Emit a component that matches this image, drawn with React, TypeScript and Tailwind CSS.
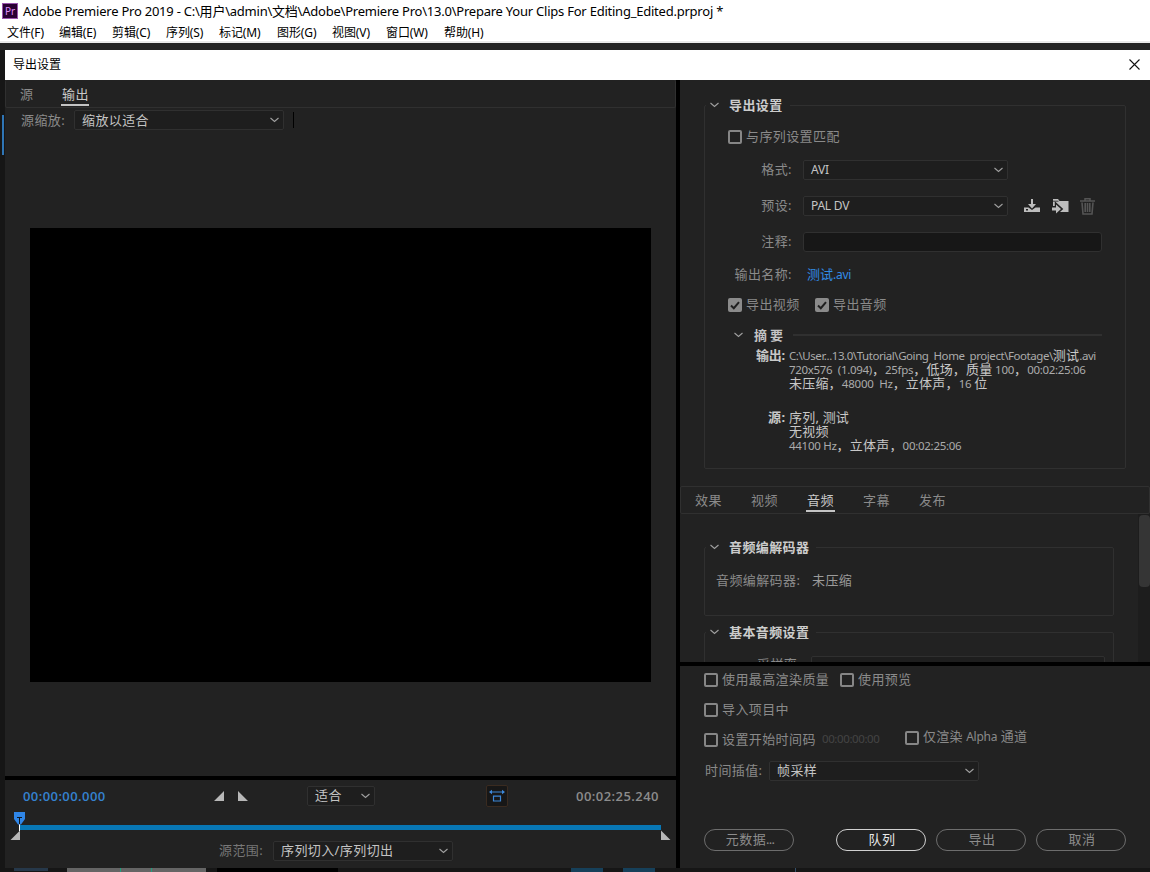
import React from "react";

function Chevron({ className = "" }: { className?: string }) {
  return (
    <svg width="9" height="6" viewBox="0 0 9 6" className={`shrink-0 ${className}`} fill="none" stroke="#a0a0a0" strokeWidth="1.1">
      <path d="M0.5 1 L4.5 4.5 L8.5 1" />
    </svg>
  );
}

function Select({ className = "", lift = "-mt-0.5", children }: { className?: string; lift?: string; children: React.ReactNode }) {
  return (
    <div className={`flex h-5 shrink-0 items-center justify-between rounded-[2px] border border-[#303030] bg-[#1e1e1e] pl-[7px] pr-1 text-[#c4c4c4] ${className}`}>
      <span className={lift}>{children}</span>
      <Chevron />
    </div>
  );
}

function Box({ checked = false }: { checked?: boolean }) {
  return checked ? (
    <span className="flex size-[14px] shrink-0 items-center justify-center rounded-[2px] bg-[#8b8b8b]">
      <svg width="10" height="9" viewBox="0 0 10 9" fill="none" stroke="#202020" strokeWidth="2">
        <path d="M1 4.5 L3.8 7.2 L9 1.2" />
      </svg>
    </span>
  ) : (
    <span className="size-[14px] shrink-0 rounded-[2px] border-2 border-[#868686]" />
  );
}

function Check({ label, checked, className = "" }: { label: React.ReactNode; checked?: boolean; className?: string }) {
  return (
    <label className={`flex h-5 shrink-0 items-center gap-1 ${className}`}>
      <Box checked={checked} />
      <span className="-mt-[3px]">{label}</span>
    </label>
  );
}

function Legend({ children }: { children: React.ReactNode }) {
  return (
    <div className="-mt-[9px] flex">
      <div className="ml-px flex h-[18px] items-center bg-[#222222] pb-0.5 pl-1 pr-[7px] text-[#cccccc]">
        <Chevron className="mr-[10px]" />
        <span className="-mt-px font-bold">{children}</span>
      </div>
    </div>
  );
}

function Pill({ children, className = "border-[#6d6d6d] text-[#8d8d8d]" }: { children: React.ReactNode; className?: string }) {
  return (
    <button className={`flex h-[22px] w-[90px] shrink-0 items-center justify-center rounded-full border pb-0.5 pl-0.5 ${className}`}>
      {children}
    </button>
  );
}

const menus = ["文件(F)", "编辑(E)", "剪辑(C)", "序列(S)", "标记(M)", "图形(G)", "视图(V)", "窗口(W)", "帮助(H)"];
const menuWidths = ["w-[52px]", "w-[53px]", "w-[54px]", "w-[53px]", "w-[58px]", "w-[55px]", "w-[54px]", "w-[58px]", "w-[50px]"];

function LeftPanel() {
  return (
    <div className="flex w-[671px] shrink-0 flex-col">
      <div className="flex h-7 rounded-[2px] border border-t-0 border-[#303030] pl-[14px]">
        <span className="mt-1 w-[41px]">源</span>
        <span className="mt-1 h-[22px] w-7 whitespace-nowrap border-b-2 border-[#c4c4c4] pl-px text-[#cacaca]">输出</span>
      </div>
      <div className="flex h-6 items-center pl-4">
        <span className="w-[53px] pb-px">源缩放:</span>
        <Select className="w-[210px]" lift="">缩放以适合</Select>
        <span className="ml-[9px] h-4 w-px bg-black" />
      </div>
      <div className="ml-[25px] mt-[96px] h-[454px] w-[621px] bg-black" />
      <div className="mt-[94px] h-1 bg-black" />
      <div className="flex h-8 items-center pl-[18px]">
        <span className="w-[191px] text-[13px] font-semibold tracking-[0.420px] text-[#3582d0] [font-family:'Open_Sans']">00:00:00.000</span>
        <svg width="34" height="10" viewBox="0 0 34 10" fill="#b8b8b8">
          <path d="M0 10 H10 V0 Z M24 0 V10 H34 Z" />
        </svg>
        <Select className="ml-[59px] w-[68px]">适合</Select>
        <div className="ml-[111px] flex size-[22px] items-center justify-center rounded-[2px] border border-[#3a2b20] bg-[#171717]">
          <svg width="16" height="14" viewBox="0 0 16 14" fill="none" stroke="#3d87d8" strokeWidth="1.2">
            <path d="M1 3 H15 M4.500 7.200 H11.500 V12 H4.500 Z" />
            <path d="M0 3 L3 0.800 V5.200 Z M16 3 L13 0.800 V5.200 Z" fill="#3d87d8" stroke="none" />
          </svg>
        </div>
        <span className="ml-[68px] whitespace-nowrap text-[13px] font-semibold tracking-[0.450px] text-[#8c8c8c] [font-family:'Open_Sans']">00:02:25.240</span>
      </div>
      <svg width="671" height="30" viewBox="0 0 671 30" className="shrink-0">
        <rect x="15" y="13" width="641" height="5" fill="#0877b5" />
        <rect x="14" y="12" width="1" height="7" fill="#fff" />
        <path d="M5.500 28 H15 V18.500 Z M656 18.500 V28 H665.500 Z" fill="#b8b8b8" />
        <path d="M9 -1 H20 V7 L16 12.500 H13 L9 7 Z" fill="#2f86e8" />
        <path d="M12 5.500 H17 M14.500 5.500 V12" stroke="#101820" />
      </svg>
      <div className="flex h-[18px] items-center pl-[214px]">
        <span className="w-[54px] pb-0.5 text-[#777777]">源范围:</span>
        <Select className="w-[180px]">序列切入/序列切出</Select>
      </div>
    </div>
  );
}

function Latin({ children }: { children: React.ReactNode }) {
  return <span className="text-[12px] tracking-[-0.250px]">{children}</span>;
}

function ExportSettings() {
  return (
    <div className="ml-6 mt-[25px] h-[364px] w-[422px] shrink-0 rounded-[2px] border border-[#303030]">
      <Legend>导出设置</Legend>
      <div className="mt-[11px] flex h-[22px] items-center pl-[23px]">
        <Check label="与序列设置匹配" />
      </div>
      <div className="mt-3 flex h-5 items-center">
        <span className="w-[98px] pb-0.5 pr-[11px] text-right">格式:</span>
        <Select className="w-[205px]"><Latin>AVI</Latin></Select>
      </div>
      <div className="mt-4 flex h-5 items-center">
        <span className="w-[98px] pb-0.5 pr-[11px] text-right">预设:</span>
        <Select className="w-[205px]"><Latin>PAL DV</Latin></Select>
        <svg width="16" height="16" viewBox="0 0 16 16" className="ml-4" fill="#bdbdbd">
          <path d="M7 1 H9 V6 H12 L8 10.500 L4 6 H7 Z" />
          <path d="M0 9.500 H4.500 L8 12 L11.500 9.500 H16 V14 H0 Z M2 11 V12.500 H4 V11 Z" fillRule="evenodd" />
        </svg>
        <svg width="17" height="16" viewBox="0 0 17 16" className="ml-3" fill="#bdbdbd">
          <path d="M1 1 H6 L7.500 3 H16.500 V14 H1 Z" />
          <path d="M0 3.200 H6.500" stroke="#222222" strokeWidth="0.800" />
          <path d="M0 9.200 H4 V6 L9.500 11 L4 16 V12.800 H0 Z" stroke="#222222" strokeWidth="2.400" />
          <path d="M0 9.500 H4 V6.500 L9 11 L4 15.500 V12.500 H0 Z" />
        </svg>
        <svg width="15" height="17" viewBox="0 0 15 17" className="ml-[11px]" fill="none" stroke="#555555">
          <path d="M0 3 H15 M5 2.500 V0.800 H10 V2.500" strokeWidth="1.500" />
          <path d="M2 4.500 L3 16 H12 L13 4.500 M5.200 5 V14 M7.500 5 V14 M9.800 5 V14" strokeWidth="1.600" />
        </svg>
      </div>
      <div className="mt-4 flex h-5 items-center">
        <span className="w-[98px] pb-0.5 pr-[11px] text-right">注释:</span>
        <div className="h-5 w-[299px] rounded-[3px] border border-[#303030] bg-[#171717]" />
      </div>
      <div className="mt-3 flex h-5 items-center">
        <span className="w-[102px] pr-[15px] text-right">输出名称:</span>
        <span className="tracking-normal text-[#328ce6]">测试<Latin>.avi</Latin></span>
      </div>
      <div className="mt-[11px] flex h-5 items-center pl-[23px]">
        <Check checked label="导出视频" className="w-[87px]" />
        <Check checked label="导出音频" />
      </div>
      <div className="mt-[10px] flex h-5 items-center pl-[29px]">
        <Chevron />
        <span className="ml-[11px] w-[39px] font-bold tracking-[3px] text-[#c4c4c4]">摘要</span>
        <span className="h-0.5 w-[309px] bg-[#303030]" />
      </div>
      <div className="mt-[3px] flex leading-[14px] text-[#ababab]">
        <b className="w-[79px] whitespace-nowrap pl-[51px] tracking-[-0.300px] text-[#c8c8c8]">输出:</b>
        <div className="ml-[5px] whitespace-pre pt-px text-[11.500px] tracking-[-0.220px]">
          <div className="flex h-[14px] items-center tracking-[-0.440px]">C:\User...13.0\Tutorial\Going  Home  project\Footage\<Zh>测试</Zh>.avi</div>
          <div className="flex h-[14px] items-center tracking-[-0.310px]">720x576  (1.094)<Zh>，</Zh>25fps<Zh>，低场，质量</Zh> 100<Zh>，</Zh>00:02:25:06</div>
          <div className="flex h-[14px] items-center"><Zh>未压缩，</Zh>48000  Hz<Zh>，立体声，</Zh>16 <Zh>位</Zh></div>
        </div>
      </div>
      <div className="mt-[19px] flex leading-[14px] text-[#ababab]">
        <b className="w-[79px] whitespace-nowrap pl-[63px] text-[#c8c8c8]">源:</b>
        <div className="ml-[5px] whitespace-pre pt-px text-[11.500px] tracking-[-0.280px]">
          <div className="flex h-[14px] items-center"><Zh>序列, 测试</Zh></div>
          <div className="flex h-[14px] items-center"><Zh>无视频</Zh></div>
          <div className="flex h-[14px] items-center">44100 Hz<Zh>，立体声，</Zh>00:02:25:06</div>
        </div>
      </div>
    </div>
  );
}

function Zh({ children }: { children: React.ReactNode }) {
  return <span className="-mt-0.5 text-[13px] tracking-[0.200px] text-[#c8c8c8]">{children}</span>;
}

function AudioTab() {
  return (
    <div className="flex h-[148px] shrink-0 justify-between overflow-hidden">
      <div className="ml-6 w-[410px]">
        <div className="mt-[33px] h-[69px] rounded-[2px] border border-[#303030]">
          <Legend>音频编解码器</Legend>
          <div className="mt-[13px] flex h-5 items-center pl-[11px]">
            <span className="w-24">音频编解码器:</span>
            <span className="text-[#9b9b9b]">未压缩</span>
          </div>
        </div>
        <div className="mt-4 h-[69px] rounded-[2px] border border-[#303030]">
          <Legend>基本音频设置</Legend>
          <div className="mt-[14px] flex h-5 items-center pl-[52px]">
            <span className="-mt-1 w-[54px]">采样率:</span>
            <div className="h-5 w-[294px] rounded-[2px] border border-[#303030] bg-[#1e1e1e]" />
          </div>
        </div>
      </div>
      <div className="w-3 bg-[#1d1d1d] pl-px pt-px">
        <div className="h-[72px] w-[11px] rounded-[4px] bg-[#353535]" />
      </div>
    </div>
  );
}

function RightPanel() {
  const tabs = ["效果", "视频", "音频", "字幕", "发布"];
  return (
    <div className="flex w-[470px] shrink-0 flex-col">
      <ExportSettings />
      <div className="mt-[17px] flex h-7 shrink-0 gap-7 rounded-[2px] border border-[#303030] pl-[14px] pt-[3px]">
        {tabs.map((t, i) => (
          <span key={t} className={`h-[22px] whitespace-nowrap ${i === 2 ? "-ml-px w-[29px] border-b-2 border-[#c4c4c4] pl-px text-[#cacaca]" : "w-7"}`}>{t}</span>
        ))}
      </div>
      <AudioTab />
      <div className="h-1 shrink-0 bg-black" />
      <div className="flex h-[202px] shrink-0 flex-col pl-6">
        <div className="mt-1 flex h-5 items-center">
          <Check label="使用最高渲染质量" className="w-[136px]" />
          <Check label="使用预览" />
        </div>
        <div className="mt-[10px] flex h-5 items-center">
          <Check label="导入项目中" />
        </div>
        <div className="mt-[10px] flex h-5 items-center">
          <Check label="设置开始时间码" className="w-[118px]" />
          <span className="w-[83px] pb-0.5 text-[11.500px] tracking-[-0.400px] text-[#444444]">00:00:00:00</span>
          <Check label={<span className="tracking-[0.200px]">仅渲染 <Latin>Alpha</Latin> 通道</span>} className="-mt-1" />
        </div>
        <div className="mt-[11px] flex h-5 items-center">
          <span className="w-[65px] pb-0.5 pl-px">时间插值:</span>
          <Select className="w-[210px]">帧采样</Select>
        </div>
        <div className="mt-[48px] flex">
          <Pill>元数据<span className="tracking-[-0.800px]">...</span></Pill>
          <div className="ml-[42px] flex gap-[10px]">
            <Pill className="border-[#d0d0d0] text-[#e8e8e8]">队列</Pill>
            <Pill>导出</Pill>
            <Pill>取消</Pill>
          </div>
        </div>
      </div>
    </div>
  );
}

export default function App() {
  return (
    <div className="flex h-[872px] w-[1150px] flex-col overflow-hidden bg-[#161616] text-[13px] leading-5 tracking-[0.400px] text-[#8a8a8a] [font-family:'Noto_Sans','Noto_Sans_CJK_SC',sans-serif]">
      <div className="h-[43px] shrink-0 border-b-2 border-[#e8e8e8] bg-white text-black">
        <div className="flex h-[22px] items-center pl-[2px]">
          <span className="flex size-4 items-center justify-center border border-[#9a54ad] bg-[#2a0033] text-[10px] tracking-normal text-[#dd8cf5]">Pr</span>
          <span className="ml-[5px] whitespace-nowrap text-[13px] tracking-[-0.230px]">Adobe Premiere Pro 2019 - C:\用户\admin\文档\Adobe\Premiere Pro\13.0\Prepare Your Clips For Editing_Edited.prproj *</span>
        </div>
        <div className="flex h-[21px] items-center pl-[7px] pt-px text-[12px] tracking-[-0.100px]">
          {menus.map((m, i) => (
            <span key={m} className={`shrink-0 ${menuWidths[i]}`}>{m}</span>
          ))}
        </div>
      </div>
      <div className="h-[7px] shrink-0 bg-[#222222]" />
      <div className="flex h-[818px] shrink-0">
        <div className="w-[5px] pl-0.5 pt-[65px]">
          <div className="h-10 w-0.5 bg-[#2f75b5]" />
        </div>
        <div className="flex w-[1145px] flex-col">
          <div className="flex h-[30px] items-center justify-between bg-white pb-px pl-2 pr-[10px] text-[12px] tracking-normal text-black">
            <span>导出设置</span>
            <svg width="11" height="11" viewBox="0 0 11 11" stroke="#111" strokeWidth="1.100">
              <path d="M0.500 0.500 L10.500 10.500 M10.500 0.500 L0.500 10.500" />
            </svg>
          </div>
          <div className="flex h-[788px] bg-[#222222]">
            <LeftPanel />
            <div className="w-1 shrink-0 bg-black" />
            <RightPanel />
          </div>
        </div>
      </div>
      <div className="flex h-1 shrink-0">
        <div className="ml-[14px] h-[3px] w-[34px] bg-[#26384a]" />
        <div className="ml-[19px] flex w-[139px] bg-[#656565] pl-[53px]">
          <span className="w-px bg-[#1fa080]" />
          <span className="ml-[30px] w-px bg-[#1fa080]" />
        </div>
        <div className="ml-[11px] w-[121px] bg-black" />
        <div className="ml-[233px] w-8 bg-[#16405a]" />
        <div className="ml-5 w-8 bg-[#16405a]" />
        <div className="ml-[140px] w-px bg-[#35506a]" />
      </div>
    </div>
  );
}
